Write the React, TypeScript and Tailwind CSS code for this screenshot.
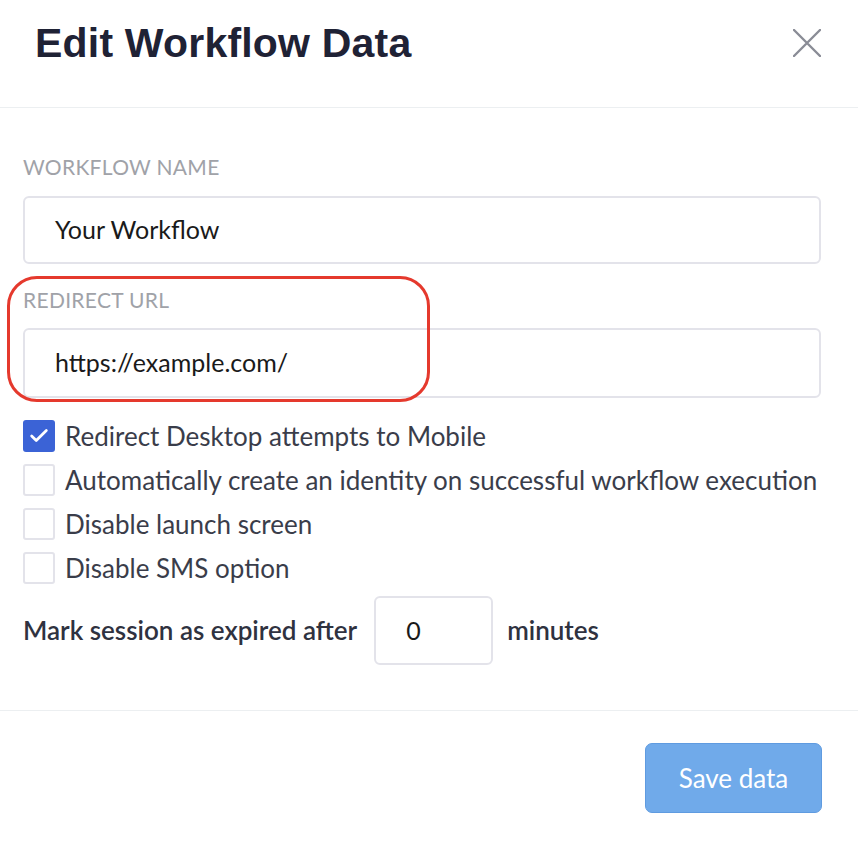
import { Check } from "lucide-react"

const options = [
  { label: "Redirect Desktop attempts to Mobile", checked: true },
  { label: "Automatically create an identity on successful workflow execution", checked: false },
  { label: "Disable launch screen", checked: false },
  { label: "Disable SMS option", checked: false },
]

export default function App() {
  return (
    <div className="w-[858px] h-[842px] bg-white font-['Lato',sans-serif] text-[#3a3d4a] overflow-hidden">
      {/* header */}
      <div className="flex items-center justify-between h-[108px] pl-[35px] pr-[37px] pb-[21px] border-b border-[#eceff1]">
        <h1 className="text-[41px] leading-[48px] font-bold text-[#1f2235] tracking-[0.2px] font-['Liberation_Sans',sans-serif]">Edit Workflow Data</h1>
        <svg width="28" height="28" viewBox="0 0 28 28" className="text-[#8a8c96]">
          <path d="M1 1L27 27M27 1L1 27" stroke="currentColor" strokeWidth="2.4" strokeLinecap="round" />
        </svg>
      </div>

      <div className="pl-[23px] pr-[37px] pt-[47px]">
        <label className="block text-[21px] text-[#a0a2a8] tracking-[0.3px] leading-[24px]">WORKFLOW NAME</label>
        <div className="mt-[17px] h-[68px] rounded-[6px] border-2 border-[#e3e3ea] flex items-center pl-[30px] text-[25px] text-[#1a1a1a]">
          Your Workflow
        </div>

        <div className="relative mt-[24px]">
          <div className="absolute left-[-16px] top-[-12px] w-[423px] h-[126px] rounded-[30px] border-[3px] border-[#e5392d]" />
          <label className="block text-[21px] text-[#a0a2a8] tracking-[0.3px] leading-[24px]">REDIRECT URL</label>
          <div className="mt-[16px] h-[70px] rounded-[6px] border-2 border-[#e3e3ea] flex items-center pl-[30px] text-[25px] text-[#1a1a1a]">
            https://example.com/
          </div>
        </div>

        <div className="mt-[22px] flex flex-col gap-[12px]">
          {options.map((o) => (
            <div key={o.label} className="flex items-center gap-[10px] h-[32px]">
              {o.checked ? (
                <div className="w-[32px] h-[32px] rounded-[3px] bg-[#3b63d6] flex items-center justify-center">
                  <Check className="w-[22px] h-[22px] text-white" strokeWidth={3} />
                </div>
              ) : (
                <div className="w-[32px] h-[32px] rounded-[3px] border-2 border-[#e3e3ea] bg-white" />
              )}
              <span className="text-[26px] whitespace-nowrap">{o.label}</span>
            </div>
          ))}
        </div>

        <div className="mt-[12px] flex items-center h-[69px]">
          <span className="text-[26px] font-semibold text-[#2f3240]">Mark session as expired after</span>
          <div className="ml-[17px] w-[119px] h-[69px] rounded-[6px] border-2 border-[#e3e3ea] flex items-center pl-[30px] text-[25px] text-[#1a1a1a]">
            0
          </div>
          <span className="ml-[14px] text-[26px] font-semibold text-[#2f3240]">minutes</span>
        </div>
      </div>

      <div className="mt-[45px] border-t border-[#eceff1] flex justify-end pr-[36px] pt-[32px]">
        <button className="w-[177px] h-[70px] rounded-[7px] bg-[#70aaea] border border-[#5f9be0] text-white text-[26px]">
          Save data
        </button>
      </div>
    </div>
  )
}
